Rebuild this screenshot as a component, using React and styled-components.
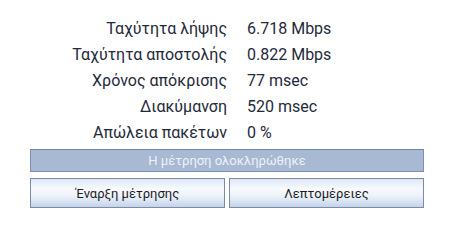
import React from "react";
import styled, { createGlobalStyle } from "styled-components";

const GlobalStyle = createGlobalStyle`
  html, body {
    margin: 0;
    padding: 0;
    background: #ffffff;
  }
  body {
    font-family: Roboto, "Noto Sans", sans-serif;
  }
`;

const rows = [
  { label: "Ταχύτητα λήψης", value: "6.718 Mbps" },
  { label: "Ταχύτητα αποστολής", value: "0.822 Mbps" },
  { label: "Χρόνος απόκρισης", value: "77 msec" },
  { label: "Διακύμανση", value: "520 msec" },
  { label: "Απώλεια πακέτων", value: "0 %" },
];

function App() {
  return (
    <>
      <GlobalStyle />
      <Panel>
        <Results>
          {rows.map((r) => (
            <React.Fragment key={r.label}>
              <Label>{r.label}</Label>
              <Value>{r.value}</Value>
            </React.Fragment>
          ))}
        </Results>
        <Status>Η μέτρηση ολοκληρώθηκε</Status>
        <Buttons>
          <Button>Έναρξη μέτρησης</Button>
          <Button>Λεπτομέρειες</Button>
        </Buttons>
      </Panel>
    </>
  );
}

export default App;

const Panel = styled.div`
  width: 394px;
  padding: 15px 0 0 30px;
  display: flex;
  flex-direction: column;
`;

const Results = styled.div`
  display: grid;
  grid-template-columns: 197px 1fr;
  grid-auto-rows: 26px;
  column-gap: 20px;
  align-items: center;
  font-size: 16px;
  color: #1f2a3a;
`;

const Label = styled.div`
  text-align: right;
  white-space: nowrap;
`;

const Value = styled.div`
  white-space: nowrap;
`;

const Status = styled.div`
  margin-top: 4px;
  height: 21px;
  border: 1px solid #7b8fae;
  border-top-color: #6f86aa;
  background: #a8b9d3;
  color: #eef2f8;
  font-size: 13px;
  display: flex;
  align-items: center;
  justify-content: center;
`;

const Buttons = styled.div`
  margin-top: 6px;
  display: grid;
  grid-template-columns: 1fr 1fr;
  gap: 4px;
`;

const Button = styled.button`
  height: 30px;
  border: 1px solid #7c8ba3;
  border-radius: 0;
  background: linear-gradient(#dde8f5 0%, #f7fafd 35%, #eef3fa 60%, #c3d3ea 100%);
  font-family: Roboto, "Noto Sans", sans-serif;
  font-size: 13px;
  color: #1c1c1c;
  padding: 0;
  cursor: pointer;
`;
